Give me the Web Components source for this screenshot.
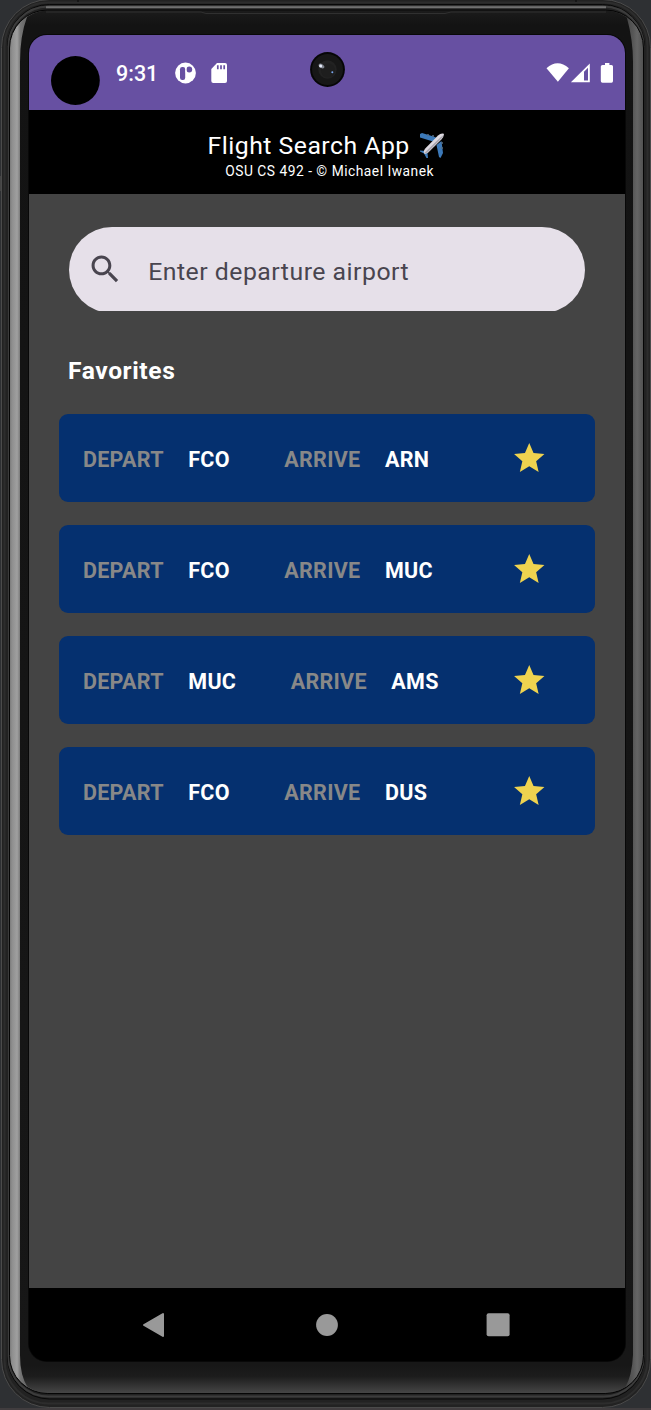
<!DOCTYPE html>
<html lang="en">
<head>
<meta charset="utf-8">
<title>Flight Search App</title>
<style>
html,body{margin:0;padding:0;background:#2e3033}
body{width:651px;height:1410px;overflow:hidden;font-family:Roboto,"Liberation Sans",sans-serif}
</style>
</head>
<body>
<phone-frame>
  <status-bar time="9:31"></status-bar>
  <app-header>
    <span slot="title">Flight Search App</span>
    <span slot="subtitle">OSU CS 492 - © Michael Iwanek</span>
  </app-header>
  <app-content>
    <search-field slot="search">Enter departure airport</search-field>
    <span slot="heading">Favorites</span>
    <flight-card depart="FCO" arrive="ARN"></flight-card>
    <flight-card depart="FCO" arrive="MUC"></flight-card>
    <flight-card depart="MUC" arrive="AMS"></flight-card>
    <flight-card depart="FCO" arrive="DUS"></flight-card>
  </app-content>
  <nav-bar></nav-bar>
</phone-frame>
<script>
const define = (name, html, init) => customElements.define(name, class extends HTMLElement {
  constructor() {
    super();
    const t = document.createElement('template');
    t.innerHTML = html;
    this.attachShadow({ mode: 'open' }).append(t.content.cloneNode(true));
  }
  connectedCallback() { if (init) init(this, this.shadowRoot); }
});

define('phone-frame', `
<style>
:host{display:block;position:relative;box-sizing:border-box;width:651px;height:1410px;padding:35px 26px 49px 29px}
.body{position:absolute;inset:0;display:block}
.screen{position:relative;display:flex;flex-direction:column;width:596.3px;height:1326px;border-radius:18px;overflow:hidden;background:#000}
</style>
<svg class="body" width="651" height="1410" viewBox="0 0 651 1410" fill="none">
  <defs>
    <linearGradient id="band" x1="0" x2="1" y1="0" y2="0">
      <stop offset="0" stop-color="#777"/><stop offset=".004" stop-color="#8e8e8e"/><stop offset=".012" stop-color="#a0a0a0"/><stop offset=".017" stop-color="#777"/>
      <stop offset=".06" stop-color="#202020"/><stop offset=".95" stop-color="#202020"/><stop offset=".984" stop-color="#585858"/><stop offset=".99" stop-color="#656565"/><stop offset="1" stop-color="#505050"/>
    </linearGradient>
    <linearGradient id="glass" x1="0" x2="0" y1="11" y2="1393" gradientUnits="userSpaceOnUse">
      <stop offset="0" stop-color="#1b1b1b"/><stop offset=".01" stop-color="#131313"/><stop offset=".98" stop-color="#171717"/><stop offset=".988" stop-color="#1c1c1c"/><stop offset="1" stop-color="#464646"/>
    </linearGradient>
    <clipPath id="inner"><rect x="10" y="10.5" width="633" height="1382.5" rx="38"/></clipPath>
  </defs>
  <rect x="0" y="176" width="4" height="15" fill="#444"/>
  <rect x="1.5" y="-.5" width="649" height="1408" rx="48" fill="#222" stroke="#4b4b4b"/>
  <rect x="4.5" y="2.5" width="643" height="1401" rx="44" stroke="#2d2d2d" stroke-width="2"/>
  <rect x="7.5" y="4.5" width="637" height="1394.5" rx="42" stroke="#080808"/>
  <rect x="8.5" y="6.5" width="635" height="1390" rx="40" stroke="#3c3c3c" stroke-width="2"/>
  <path d="M46 7.3H606" stroke="#707070" stroke-width="2"/>
  <rect x="9.5" y="10" width="634" height="1383.5" rx="38" fill="url(#band)" stroke="#050505"/>
  <path clip-path="url(#inner)" d="M26 11H627V18Q633 40 633 62V1355Q632 1376 625 1388V1394H28V1388Q20 1376 20 1355V62Q20 36 27 17Z" fill="url(#glass)"/>
  <path d="M46 12H201L206 13.5H445L451 12H606" stroke="#303030"/>
  <path d="M78 0V2M576 0V2" stroke="#090909"/>
  <path d="M0 1409H651" stroke="#413d3f" stroke-width="2"/>
  <rect x="28" y="34" width="598" height="1328" rx="19" fill="#080808"/>
</svg>
<div class="screen"><slot></slot></div>`);

define('status-bar', `
<style>
:host{position:relative;display:flex;flex:none;box-sizing:border-box;height:75px;background:#6750a2;color:#fff;padding:0 11px 0 87px;align-items:center}
.time{font-size:21.5px;font-weight:500;line-height:76px;width:59px;padding-top:2px}
svg{display:block;flex:none}
.grow{flex:1}
.lens{position:absolute}
</style>
<span class="time"></span>
<svg width="22" height="22" viewBox="0 0 22 22"><circle cx="10.5" cy="11" r="10.4" fill="#fff"/><rect x="5" y="5" width="5.2" height="13" rx="2.2" fill="#6750a2"/><circle cx="14.3" cy="7.5" r="2.9" fill="#6750a2"/><path d="M11 5V10.5" stroke="#fff" stroke-width="1"/></svg>
<svg style="margin-left:14px" width="17" height="20" viewBox="0 0 17 20"><path d="M6 0H14Q16 0 16 2V18Q16 20 14 20H2.3Q.3 20 .3 18V6Z" fill="#fff"/><path d="M6.8 2.3V6.3M10 2.3V6.3M13.2 2.3V6.3" stroke="#6750a2" stroke-width="1.7"/></svg>
<span class="grow"></span>
<svg width="23" height="20" viewBox="0 0 23 20"><path d="M.5 5.2Q11.5 -4.7 22.9 5.2L11.9 18.8Z" fill="#fff"/></svg>
<svg style="margin-left:1px" width="20" height="20" viewBox="0 0 20 20"><path d="M19.8 .4V19.3H.9Z" fill="#fff"/><path d="M14 8.8L18 4.8V17.4H14Z" fill="#6750a2"/></svg>
<svg style="margin-left:10px" width="14" height="20" viewBox="0 0 14 20"><path d="M5 0H9.4V2H11.5Q13 2 13 3.5V18Q13 19.8 11.5 19.8H2.5Q.8 19.8 .8 18V3.5Q.8 2 2.5 2H5Z" fill="#fff"/></svg>
<svg class="lens" style="left:22px;top:21px" width="50" height="50" viewBox="0 0 50 50"><circle cx="24.4" cy="24.5" r="24.4" fill="#000"/></svg>
<svg class="lens" style="left:281px;top:17px" width="36" height="36" viewBox="0 0 36 36"><circle cx="17.5" cy="17.5" r="17.4" fill="#060606"/><circle cx="17.5" cy="17.5" r="15.5" fill="#171717"/><circle cx="17.5" cy="17.5" r="9.2" fill="#222"/><circle cx="18" cy="18.5" r="7" fill="#1e1e1e"/><ellipse cx="11.5" cy="14" rx="3.2" ry="1.9" fill="#7d828c" transform="rotate(35 11.5 14)"/><circle cx="10.6" cy="14" r="1.5" fill="#e8eefc"/><circle cx="22.3" cy="20.3" r="1" fill="#7aa8f0"/></svg>`,
(el, r) => { r.querySelector('.time').textContent = el.getAttribute('time'); });

define('app-header', `
<style>
:host{display:flex;flex:none;flex-direction:column;align-items:center;box-sizing:border-box;height:83.5px;background:#000;color:#fff;padding-top:22px}
.title{display:flex;align-items:center;height:28px;line-height:28px;font-size:24.8px;letter-spacing:.48px;margin-right:2px}
svg{display:block;margin-left:9px}
.sub{font-size:13.8px;line-height:16px;letter-spacing:.5px;margin:3px 0 0 5px}
</style>
<div class="title"><slot name="title"></slot>
<svg width="26" height="26" viewBox="0 0 26 26"><path d="M1 1L3 0L14.5 3.5L18 5L14 8.5L1 4.5ZM22.5 8L24 20L21.5 25L20 24L17.5 12ZM1 17.5L7 18L8.5 20L9 25L7.5 25L5 20.5L1 18.5Z" fill="#3c79b8"/><path d="M9 1V3M14 2V4M24 10H22M24 15H22" stroke="#566d83" stroke-width="1.5"/><path d="M24.8 .7Q22 -.2 19 2.4L6 15.8Q4.2 18.3 5 20.2Q7 21.5 9.3 19.6L22.4 6.5Q25.3 3.2 24.8 .7Z" fill="#ddd9e0"/><path d="M24.6 2Q23.7 4.5 21 7L9 19Q7 20.8 5 20.2L21 4.8Z" fill="#aaa7b0"/></svg></div>
<div class="sub"><slot name="subtitle"></slot></div>`);

define('app-content', `
<style>
:host{display:block;flex:1;box-sizing:border-box;background:#444;padding:33.5px 30.8px 0 30.4px}
.search{padding:0 9.3px}
.heading{font-size:24.6px;font-weight:700;letter-spacing:.6px;line-height:36px;color:#fff;margin:42px 0 25px 8.6px}
.list{display:flex;flex-direction:column;gap:22.7px}
</style>
<div class="search"><slot name="search"></slot></div>
<div class="heading"><slot name="heading"></slot></div>
<div class="list"><slot></slot></div>`);

define('search-field', `
<style>
:host{display:block;height:84px;overflow:hidden}
.pill{display:flex;align-items:center;box-sizing:border-box;height:86px;border-radius:43px;background:#e6e0e9;color:#49454f;padding-left:18.5px;font-size:24.8px;letter-spacing:.5px}
svg{display:block;margin:-1px 24.5px 0 0}
.text{line-height:30px;padding-top:3px}
</style>
<div class="pill"><svg width="36.5" height="36.5" viewBox="0 0 24 24"><path fill="#49454f" d="M15.5 14h-.79l-.28-.27C15.41 12.59 16 11.11 16 9.5 16 5.91 13.09 3 9.5 3S3 5.91 3 9.5 5.91 16 9.5 16c1.61 0 3.09-.59 4.23-1.57l.27.28v.79l5 4.99L20.49 19l-4.99-5zm-6 0C7.01 14 5 11.99 5 9.5S7.01 5 9.5 5 14 7.01 14 9.5 11.99 14 9.5 14z"/></svg><span class="text"><slot></slot></span></div>`);

define('flight-card', `
<style>
:host{display:flex;align-items:center;box-sizing:border-box;height:88.3px;border-radius:9px;background:#05306f;padding:2px 47px 0 23.6px;font-size:21.5px;font-weight:700;letter-spacing:.28px;color:#fff}
.leg{display:flex;gap:24.5px}
.leg + .leg{margin-left:54.5px}
.label{color:#888}
svg{display:block;margin:-1px 0 0 auto}
</style>
<div class="leg"><span class="label">DEPART</span><span class="from"></span></div>
<div class="leg"><span class="label">ARRIVE</span><span class="to"></span></div>
<svg width="36.5" height="36.5" viewBox="0 0 24 24"><path fill="#efd34f" d="M12 17.27L18.18 21l-1.64-7.03L22 9.24l-7.19-.61L12 2 9.19 8.63 2 9.24l5.46 4.73L5.82 21z"/></svg>`,
(el, r) => {
  r.querySelector('.from').textContent = el.getAttribute('depart');
  r.querySelector('.to').textContent = el.getAttribute('arrive');
});

define('nav-bar', `
<style>
:host{display:flex;flex:none;align-items:center;box-sizing:border-box;height:73px;background:#000;padding:0 115px 0 113px;justify-content:space-between}
svg{display:block}
</style>
<svg width="23" height="26" viewBox="0 0 23 26"><path d="M2 13L21 2V24Z" fill="#999" stroke="#999" stroke-width="2" stroke-linejoin="round"/></svg>
<svg width="24" height="22" viewBox="0 0 24 22"><circle cx="13" cy="11" r="10.9" fill="#999"/></svg>
<svg width="24" height="24" viewBox="0 0 24 24"><rect x=".6" y=".3" width="23" height="23" rx="2" fill="#999"/></svg>`);
</script>
</body>
</html>
